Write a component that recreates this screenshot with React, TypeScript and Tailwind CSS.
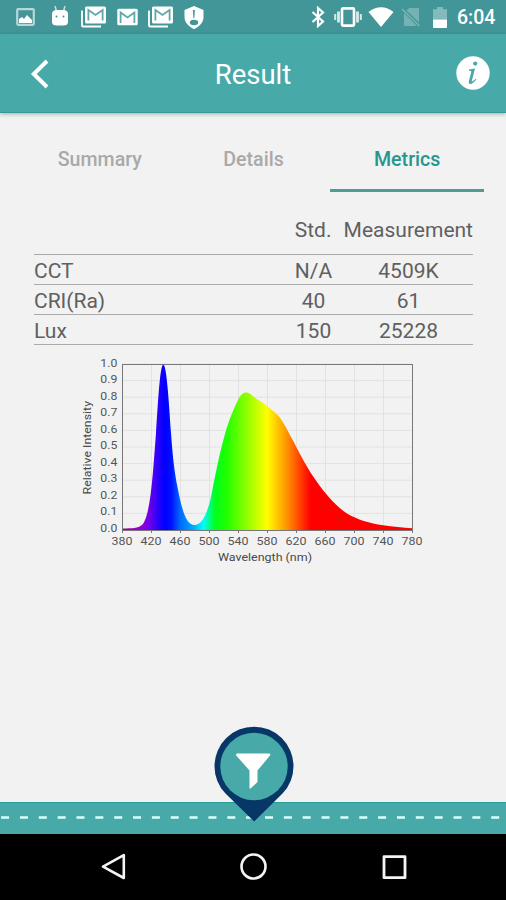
import { useState } from 'react'

const TABS = ['Summary', 'Details', 'Metrics']

const ROWS = [
  { name: 'CCT', std: 'N/A', value: '4509K' },
  { name: 'CRI(Ra)', std: '40', value: '61' },
  { name: 'Lux', std: '150', value: '25228' },
]

// plot area inside the chart svg
const PLOT = { x: 42, y: 9, w: 290, h: 166 }

const CURVE =
  'M42 173.5 C54 173.5 59 173 63 169 C71 157 73 116 76 78 C78 48 80 9.5 83.3 9.5 C86.5 9.5 89 46 91 78 C92.5 99 94.5 118 97.5 132 C101 150 105 170 114.5 170 C122 170 127 159 131 142 C134.5 124 139 100 145 79 C149 64 156 49 159 43 C162 38 165 37 167 37.6 C171 38.5 174 43 180 46 C187 50 192 55 198 60.5 C204 67 208 77 214 87.5 C221 101 228 115 237 127 C246 140 257 152 267 158.5 C277 164.5 290 168.5 303 170.3 C313 171.8 323 172.5 332 173.3 V175 H42 Z'

const StackedMail = () => (
  <svg width="25" height="22" viewBox="0 0 25 22" fill="none">
    <path d="M1 4.5V19.5Q1 20.5 2 20.5H20" stroke="white" strokeWidth="1.8" />
    <rect x="4" y="0.5" width="21" height="17" rx="1.5" fill="white" />
    <path d="M7.4 14.5V4L14.5 9L21.6 4V14.5" stroke="#5fa7a8" strokeWidth="1.8" />
  </svg>
)

function StatusBar() {
  return (
    <div className="h-[34px] shrink-0 bg-[#439697] flex items-center pl-4 pr-[10px]">
      <div className="flex items-center">
        <svg width="19" height="18" viewBox="0 0 19 18" fill="none">
          <rect x="1.2" y="1.2" width="16.6" height="15.6" rx="1" stroke="#b5d8d8" strokeWidth="2.2" />
          <path d="M3 15V11L6 9L8 11L11 7L16 12V15Z" fill="white" />
        </svg>
        <svg className="ml-4 -mt-1" width="18" height="21" viewBox="0 0 18 21" fill="none">
          <path d="M4 1L5.5 6M14 1L12.5 6" stroke="#c5e2e2" strokeWidth="1.5" />
          <path d="M1 9Q1 5.5 5 5H13Q17 5.5 17 9V17Q17 20.5 12 20.5H6Q1 20.5 1 17Z" fill="white" />
          <circle cx="5.5" cy="11.5" r="1" fill="#439697" />
          <circle cx="12.5" cy="11.5" r="1" fill="#439697" />
        </svg>
        <div className="ml-3"><StackedMail /></div>
        <svg className="ml-[11px]" width="21" height="18" viewBox="0 0 21 18" fill="none">
          <rect x="0.3" y="0.7" width="20.4" height="16.6" rx="1.5" fill="white" />
          <path d="M3.6 15V4.5L10.5 9.5L17.4 4.5V15" stroke="#5fa7a8" strokeWidth="1.8" />
        </svg>
        <div className="ml-[10px]"><StackedMail /></div>
        <svg className="ml-[11px]" width="20" height="23" viewBox="0 0 20 23" fill="none">
          <path d="M10 0L19.5 4V11C19.5 16.5 15 21 10 23C5 21 0.5 16.5 0.5 11V4Z" fill="white" />
          <path d="M8.9 4H10.9L10.4 12H9.4Z" fill="#439697" />
          <ellipse cx="10" cy="16.5" rx="4.2" ry="2.8" fill="#439697" />
        </svg>
      </div>
      <div className="ml-auto mr-px flex items-center">
        <svg width="14" height="22" viewBox="0 0 14 22" fill="none">
          <path d="M1.5 6L12 15.5L7 20V2L12 6.5L1.5 16" stroke="white" strokeWidth="2.2" />
        </svg>
        <svg className="ml-[9px]" width="28" height="20" viewBox="0 0 28 20" fill="none">
          <rect x="8" y="1.4" width="12" height="17.2" rx="1" stroke="white" strokeWidth="2.6" />
          <path d="M4.5 4.5V15.5M23.5 4.5V15.5" stroke="#d5eaea" strokeWidth="2.8" />
          <path d="M1.2 7V13M26.8 7V13" stroke="#d5eaea" strokeWidth="2" />
        </svg>
        <svg className="ml-[6px]" width="26" height="20" viewBox="0 0 26 20">
          <path d="M0.5 5C8 -1.3 18 -1.3 25.5 5L13 20Z" fill="white" />
        </svg>
        <svg className="ml-[7px]" width="20" height="20" viewBox="0 0 20 20" fill="none">
          <path d="M8 1H17Q18 1 18 2V15.5L5.5 3.5ZM3 6L16 19H4Q3 19 3 18Z" fill="#75b2b3" />
          <path d="M1 2L18.5 19" stroke="#75b2b3" strokeWidth="1.7" />
        </svg>
        <svg className="ml-[12px]" width="14" height="21" viewBox="0 0 14 21">
          <path d="M4 0H10V2.3H14V12.5H0V2.3H4Z" fill="#83babb" />
          <path d="M0 12.5H14V20Q14 21 13 21H1Q0 21 0 20Z" fill="white" />
        </svg>
        <span className="ml-[10px] mt-[2px] w-[38px] text-[19.5px] leading-[22px] font-medium text-white whitespace-nowrap">6:04</span>
      </div>
    </div>
  )
}

function Header() {
  return (
    <div className="h-[79px] shrink-0 bg-[#48a9a9] border-b border-[#359998] shadow-[0_1px_4px_rgba(0,0,0,0.3)] grid grid-cols-3 items-center z-10">
      <button className="ml-[30px] mt-px w-5">
        <svg width="20" height="30" viewBox="0 0 20 30" fill="none">
          <path d="M17 2L3.8 15L17 28" stroke="white" strokeWidth="4" />
        </svg>
      </button>
      <h1 className="text-center text-[27.5px] leading-8 text-white mt-[3px]">Result</h1>
      <svg className="ml-auto mr-4" width="34" height="34" viewBox="0 0 34 34">
        <circle cx="17" cy="17" r="16.7" fill="white" />
        <circle cx="19.2" cy="7.6" r="2.1" fill="#48a9a9" />
        <path d="M13 13.6L19 12.6L15.8 25Q15.6 26.8 19.7 22.8L20.3 23.6Q16.3 28.6 14 28Q12.2 27.5 13 24.5L15.4 15.6Q15.4 14.8 13 14.8Z" fill="#48a9a9" />
      </svg>
    </div>
  )
}

function SpectrumChart() {
  const cols = Array.from({ length: 11 }, (_, i) => 380 + i * 40)
  const rows = Array.from({ length: 11 }, (_, i) => (1 - i / 10).toFixed(1))
  const bottom = PLOT.y + PLOT.h

  return (
    <svg className="ml-20 block" width="346" height="215" viewBox="0 0 346 215">
      <defs>
        <linearGradient id="spectrum" gradientUnits="userSpaceOnUse" x1="42" x2="332" y1="0" y2="0">
          <stop offset="0" stopColor="#a0008c" />
          <stop offset="0.06" stopColor="#9400d8" />
          <stop offset="0.09" stopColor="#7800e8" />
          <stop offset="0.135" stopColor="#1400ff" />
          <stop offset="0.15" stopColor="#0000ff" />
          <stop offset="0.17" stopColor="#0010ff" />
          <stop offset="0.2" stopColor="#0068ff" />
          <stop offset="0.25" stopColor="#00b0ff" />
          <stop offset="0.28" stopColor="#00ffff" />
          <stop offset="0.32" stopColor="#00ff20" />
          <stop offset="0.36" stopColor="#20ff00" />
          <stop offset="0.5" stopColor="#ffff00" />
          <stop offset="0.57" stopColor="#ff9000" />
          <stop offset="0.65" stopColor="#ff0000" />
          <stop offset="1" stopColor="#ff0000" />
        </linearGradient>
      </defs>
      {cols.map((nm, i) => (
        <g key={nm}>
          <path d={`M${PLOT.x + 0.5 + i * 29} ${PLOT.y}V${bottom}`} stroke="#e2e2e2" />
          <path d={`M${PLOT.x + 0.5 + i * 29} ${bottom}v3`} stroke="#777" />
          <text x={PLOT.x + i * 29} y="190" textAnchor="middle" fontSize="11.5" fill="#555" textLength="21" lengthAdjust="spacingAndGlyphs">{nm}</text>
        </g>
      ))}
      {rows.map((v, i) => (
        <g key={v}>
          <path d={`M${PLOT.x} ${PLOT.y + i * 16.6}h${PLOT.w}`} stroke="#e2e2e2" />
          <text x="20.3" y={11.5 + i * 16.55} fontSize="11.5" fill="#555" textLength="17" lengthAdjust="spacingAndGlyphs">{v}</text>
        </g>
      ))}
      <path d={CURVE} fill="url(#spectrum)" />
      <rect x={PLOT.x + 0.5} y={PLOT.y + 0.5} width={PLOT.w} height={PLOT.h} fill="none" stroke="#777" />
      <text x="138" y="206" fontSize="11.8" fill="#4a4a4a" textLength="94" lengthAdjust="spacingAndGlyphs">Wavelength (nm)</text>
      <text transform="translate(11 139.5) rotate(-90)" fontSize="11.8" fill="#4a4a4a" textLength="93.5" lengthAdjust="spacingAndGlyphs">Relative Intensity</text>
    </svg>
  )
}

function FilterBar() {
  return (
    <div className="relative h-8 shrink-0 bg-[#48a9a9] border-t border-[#259c96]">
      <svg className="block w-full" height="31" viewBox="0 0 506 31">
        <path d="M1.1 14.5H506" stroke="#dcffff" strokeWidth="2.6" strokeDasharray="8 10.85" />
      </svg>
      <button className="absolute left-[214px] -top-[77px]">
        <svg width="80" height="98" viewBox="0 0 80 98">
          <path d="M40.2 95.5L11.5 67.5A39.5 39.5 0 1 1 68.5 67.5Z" fill="#073767" />
          <circle cx="40" cy="40.5" r="33.7" fill="#48a9a9" />
          <path d="M23.3 27.5H55Q56.8 27.5 56.2 29.3L43.5 44.5V56L36.5 62.5Q35.5 63 35.5 61.5V44.5L22.2 29.5Q21.7 27.5 23.3 27.5Z" fill="white" />
        </svg>
      </button>
    </div>
  )
}

function NavBar() {
  return (
    <div className="h-[66px] shrink-0 bg-black flex items-center justify-between pl-[101px] pr-[99px]">
      <svg width="25" height="28" viewBox="0 0 25 28" fill="none" stroke="#f4f4f4" strokeWidth="2.6" strokeLinejoin="round">
        <path d="M22.8 2.2V25L2 13.6Z" />
      </svg>
      <svg width="28" height="28" viewBox="0 0 28 28" fill="none" stroke="#f4f4f4" strokeWidth="2.6">
        <circle cx="13.5" cy="13.5" r="12" />
      </svg>
      <svg width="25" height="25" viewBox="0 0 25 25" fill="none" stroke="#f4f4f4" strokeWidth="2.8" strokeLinejoin="round">
        <rect x="2" y="1.7" width="21" height="21" />
      </svg>
    </div>
  )
}

export default function App() {
  const [tab, setTab] = useState('Metrics')

  return (
    <div className="w-[506px] h-[900px] flex flex-col overflow-hidden bg-[#f2f2f2] font-['Roboto',sans-serif]">
      <StatusBar />
      <Header />
      <main className="flex-1 min-h-0">
        <div className="mt-[14px] ml-[23px] w-[461px] h-[65px] flex">
          {TABS.map(name => (
            <button
              key={name}
              onClick={() => setTab(name)}
              className={`flex-1 pt-[4px] border-b-[3px] text-[19.6px] font-medium ${name === tab ? 'border-[#519b97] text-[#27968f]' : 'border-transparent text-[#a9a9a9]'}`}
            >
              {name}
            </button>
          ))}
        </div>
        <div className="ml-[34px] w-[439px] text-[21px] leading-[29px] text-[#606060]">
          <div className="h-[63px] pt-[24px] flex border-b border-[#aaa]">
            <span className="ml-auto mr-[12px]">Std.</span>
            <span className="w-[129.5px] text-right whitespace-nowrap">Measurement</span>
          </div>
          {ROWS.map(row => (
            <div key={row.name} className="h-[30px] pt-[2px] flex border-b border-[#aaa]">
              <span className="w-[238px]">{row.name}</span>
              <span className="w-[83px] text-center">{row.std}</span>
              <span className="w-[107px] text-center">{row.value}</span>
            </div>
          ))}
        </div>
        <div className="mt-[10px]">
          <SpectrumChart />
        </div>
      </main>
      <FilterBar />
      <NavBar />
    </div>
  )
}
